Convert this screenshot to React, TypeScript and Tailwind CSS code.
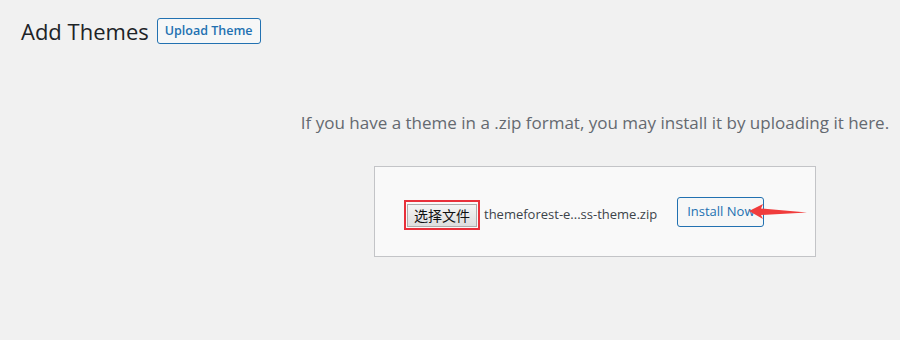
import React from 'react';

const font = { fontFamily: '"Open Sans", "Noto Sans", "Noto Sans CJK SC", sans-serif' };

function Arrow() {
    return (
        <svg className="absolute left-[72px] top-[7px]" width="60" height="18" viewBox="0 0 60 18">
            <polygon points="0,7 14,0 12,4.5 58,8.5 12,11 14,15" fill="#f03c3c" />
        </svg>
    );
}

export default function App() {
    return (
        <div className="w-[900px] h-[340px] bg-[#f1f1f1] overflow-hidden" style={font}>
            {/* Header */}
            <div className="flex items-center pl-[21px] pt-[18px] gap-[8px]">
                <h1 className="text-[22px] leading-[26px] text-[#1d2327] font-normal">Add Themes</h1>
                <button className="h-[26px] px-[7px] border border-[#2271b1] rounded-[3px] bg-[#f6f7f7] text-[#2271b1] text-[12.5px] font-semibold leading-none">
                    Upload Theme
                </button>
            </div>

            {/* Upload area */}
            <div className="ml-[298px] w-[594px] flex flex-col items-center">
                <p className="mt-[67px] text-[17px] leading-[24px] text-[#646970] whitespace-nowrap">
                    If you have a theme in a .zip format, you may install it by uploading it here.
                </p>
                <div className="mt-[31px] w-[442px] h-[91px] border border-[#c3c4c7] bg-[#f9f9f9] flex items-center pl-[29px]">
                    <div className="flex items-center mt-[7px]">
                        <div className="border-2 border-[#e8303a] p-px">
                            <button className="h-[23px] px-[6px] border border-[#adadad] bg-gradient-to-b from-[#f4f4f4] to-[#dedede] text-[14px] text-[#111] leading-none" style={{ fontFamily: '"Noto Sans CJK SC", sans-serif' }}>
                                选择文件
                            </button>
                        </div>
                        <span className="ml-[4px] text-[13px] text-[#3c434a]">themeforest-e...ss-theme.zip</span>
                    </div>
                    <div className="relative ml-[20px]">
                        <button className="h-[30px] px-[9px] border border-[#2271b1] rounded-[3px] bg-[#f6f7f7] text-[#2271b1] text-[13px] leading-none">
                            Install Now
                        </button>
                        <Arrow />
                    </div>
                </div>
            </div>
        </div>
    );
}
